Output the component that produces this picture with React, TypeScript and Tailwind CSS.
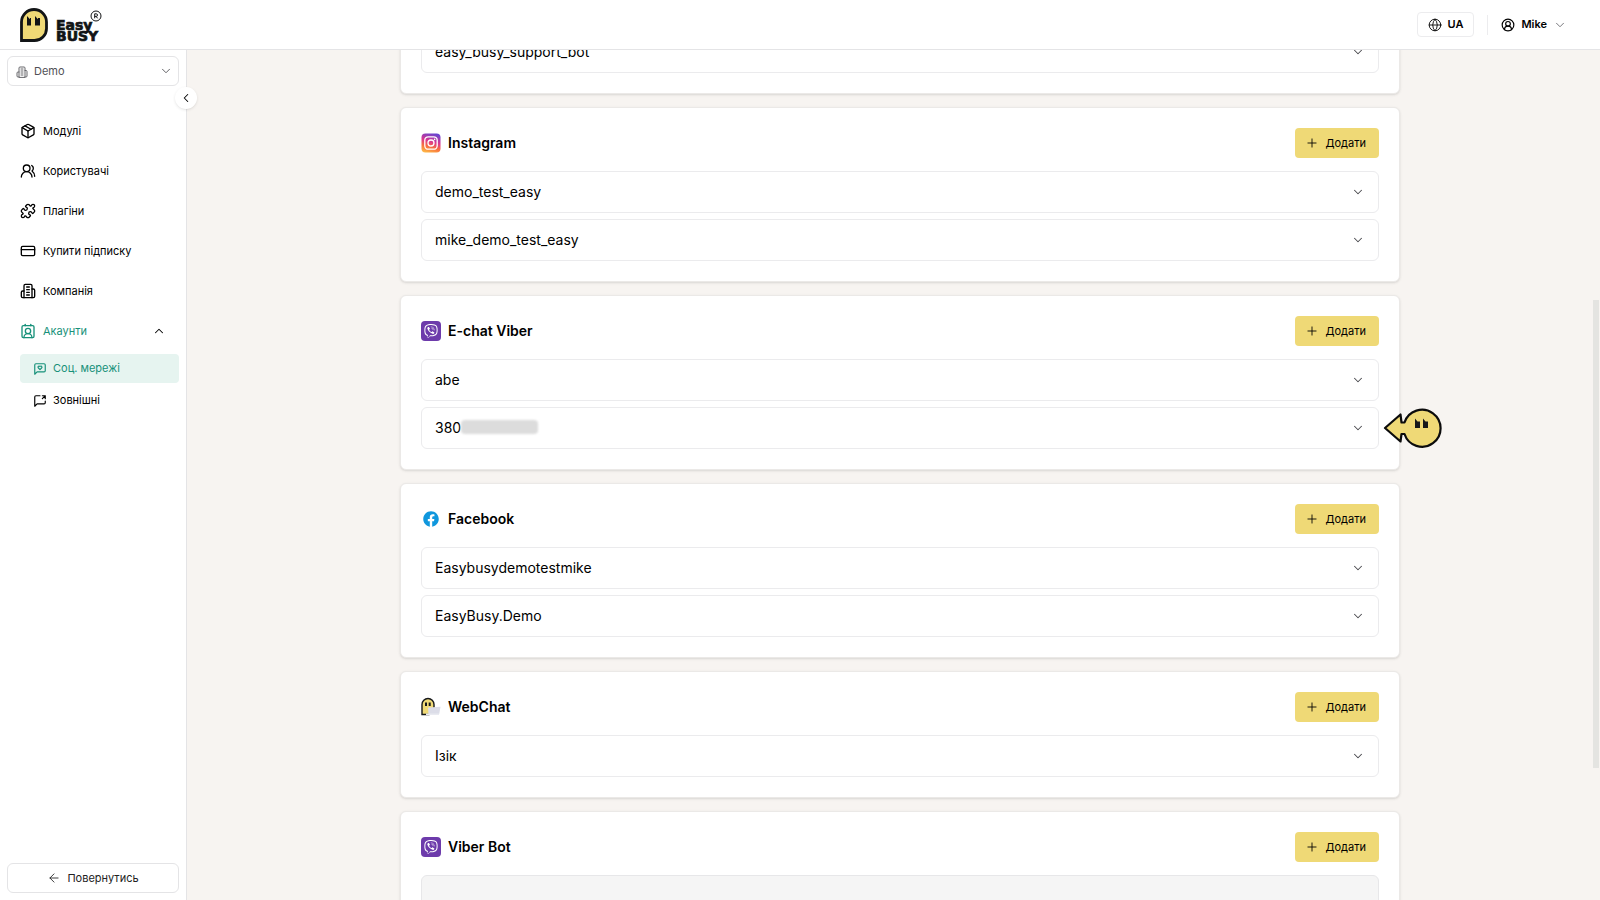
import { useLayoutEffect, useRef, useState } from "react";
import type { ReactNode } from "react";
import {
  ArrowLeft,
  ChevronDown,
  ChevronLeft,
  ChevronUp,
  CircleUserRound,
  ContactRound,
  CreditCard,
  Globe,
  Package,
  Plus,
  Puzzle,
  UsersRound,
} from "lucide-react";
import { FaFacebook, FaViber } from "react-icons/fa";

type Channel = {
  id: string;
  title?: string;
  icon?: ReactNode;
  accounts: string[];
};

function LineIcon({ className, children }: { className?: string; children: ReactNode }) {
  return (
    <svg
      viewBox="0 0 24 24"
      className={className}
      fill="none"
      stroke="currentColor"
      strokeWidth="2"
      strokeLinecap="round"
      strokeLinejoin="round"
      aria-hidden="true"
    >
      {children}
    </svg>
  );
}

function CompanyIcon({ className }: { className?: string }) {
  return (
    <LineIcon className={className}>
      <path d="M6 22V4a2 2 0 0 1 2-2h8a2 2 0 0 1 2 2v18Z" />
      <path d="M6 12H4a2 2 0 0 0-2 2v6a2 2 0 0 0 2 2h2" />
      <path d="M18 9h2a2 2 0 0 1 2 2v9a2 2 0 0 1-2 2h-2" />
      <path d="M10 6h4M10 10h4M10 14h4M10 18h4" />
    </LineIcon>
  );
}

function SocialIcon({ className }: { className?: string }) {
  return (
    <LineIcon className={className}>
      <path d="M21 15a2 2 0 0 1-2 2H7l-4 4V5a2 2 0 0 1 2-2h14a2 2 0 0 1 2 2z" />
      <path d="M14.800 7.500a1.840 1.840 0 0 0-2.600 0l-.2.3-.3-.3a1.840 1.840 0 1 0-2.400 2.800L12 13l2.700-2.700c.9-.9.8-2.100.1-2.800" />
    </LineIcon>
  );
}

function ExternalIcon({ className }: { className?: string }) {
  return (
    <LineIcon className={className}>
      <path d="M21 12v3a2 2 0 0 1-2 2H7l-4 4V5a2 2 0 0 1 2-2h7" />
      <path d="M16 3h5v5M16 8l5-5" />
    </LineIcon>
  );
}

const navItems = [
  { label: "Модулі", icon: Package },
  { label: "Користувачі", icon: UsersRound },
  { label: "Плагіни", icon: Puzzle },
  { label: "Купити підписку", icon: CreditCard },
  { label: "Компанія", icon: CompanyIcon },
];

function InstagramIcon() {
  return (
    <svg viewBox="0 0 20 20" className="h-5 w-5" aria-hidden="true">
      <defs>
        <linearGradient id="ig" x1="0.3" y1="1" x2="0.6" y2="0">
          <stop offset="0" stopColor="#fdb546" />
          <stop offset="0.3" stopColor="#f8703e" />
          <stop offset="0.6" stopColor="#d93590" />
          <stop offset="1" stopColor="#6a45cf" />
        </linearGradient>
      </defs>
      <rect x="0.5" y="0.5" width="19" height="19" rx="4" fill="url(#ig)" />
      <rect x="3.8" y="3.8" width="12.4" height="12.4" rx="3.5" fill="none" stroke="#fff" strokeWidth="1.3" />
      <circle cx="10" cy="10" r="3" fill="none" stroke="#fff" strokeWidth="1.3" />
      <circle cx="13.6" cy="6.4" r="0.8" fill="#fff" />
    </svg>
  );
}

function ViberIcon() {
  return (
    <span className="flex h-5 w-5 items-center justify-center rounded bg-[#6d3bab]">
      <FaViber className="h-3.5 w-3.5 text-white" />
    </span>
  );
}

function WebChatIcon() {
  return (
    <svg viewBox="0 0 20 20" className="h-5 w-5" aria-hidden="true">
      <path d="M1 17.500V7.500a6 6 0 0 1 12 0v5a5 5 0 0 1-5 5Z" fill="#efd976" stroke="#16181a" strokeWidth="1.400" />
      <path d="M5 5.500v3.500M8.700 5.500v3.500" stroke="#16181a" strokeWidth="2" />
      <path d="M7 10.500l12.500-.8-1.300 7.300a1 1 0 0 1-1 .8H7.500Z" fill="#dcdde8" />
      <path d="M5 16.500h13v1.500H5Z" fill="#e9eaf1" />
    </svg>
  );
}

const channels: Channel[] = [
  { id: "support", accounts: ["easy_busy_support_bot"] },
  { id: "instagram", title: "Instagram", icon: <InstagramIcon />, accounts: ["demo_test_easy", "mike_demo_test_easy"] },
  { id: "echat", title: "E-chat Viber", icon: <ViberIcon />, accounts: ["abe", "380"] },
  {
    id: "facebook",
    title: "Facebook",
    icon: <FaFacebook className="h-4 w-4 text-[#0f97dd]" />,
    accounts: ["Easybusydemotestmike", "EasyBusy.Demo"],
  },
  { id: "webchat", title: "WebChat", icon: <WebChatIcon />, accounts: ["Ізік"] },
  { id: "viber", title: "Viber Bot", icon: <ViberIcon />, accounts: [] },
];

function Logo() {
  return (
    <a href="#" className="flex items-center gap-2 text-[#121416]">
      <svg viewBox="0 0 28 34" className="h-[34px] w-7" aria-hidden="true">
        <path
          d="M1.500 32.500V14a12.500 12.500 0 0 1 25 0v6.500a12 12 0 0 1-12 12Z"
          fill="#efd976"
          stroke="#121416"
          strokeWidth="2.800"
        />
        <path d="M7 8l3 3.200v-1.200h1V17.500H7Z M15 8l3 3.200v-1.200h2V17.500H15Z" fill="#121416" />
      </svg>
      <span className="relative mt-3 flex flex-col font-['DejaVu_Sans'] text-sm leading-[11px] font-bold [-webkit-text-stroke:0.7px_#121416]">
        <span>Easy</span>
        <span>BUSY</span>
        <svg viewBox="0 0 12 12" className="absolute -top-2.5 left-[34px] h-3 w-3" aria-hidden="true">
          <circle cx="6" cy="6" r="5" fill="#fff" stroke="#121416" />
          <path d="M4.700 8.300V3.800h1.500a1.300 1.300 0 0 1 0 2.600H4.700M6.200 6.400l1.300 1.900" fill="none" stroke="#121416" />
        </svg>
      </span>
    </a>
  );
}

function Pointer() {
  return (
    <svg viewBox="0 0 60 42" className="absolute top-0 left-full ml-1 h-[42px] w-[60px]" aria-hidden="true">
      <path
        d="M2 21 L17.500 7.500 L18.500 15.500 L21.500 15.500 A18.500 18.500 0 1 1 21.500 27 L18.500 27 L17.500 34.500 Z"
        fill="#efd976"
        stroke="#0c0c0c"
        strokeWidth="2.200"
        strokeLinejoin="round"
      />
      <path d="M32 11.500l2.500 3h2.500V21h-5Z M40 11.500l2.500 3h2.500V21h-5Z" fill="#16181a" />
    </svg>
  );
}

function AccountRow({ name, masked }: { name: string; masked?: boolean }) {
  return (
    <li className="relative">
      <button
        type="button"
        className="flex h-[42px] w-full items-center rounded-md border border-[#ebebed] bg-white px-[13px] text-left text-sm hover:bg-gray-50"
      >
        {name}
        {masked && <span className="mb-0.5 h-3.5 w-[77px] rounded-sm bg-[#dcdcdc] blur-[1px]" />}
        <ChevronDown className="ml-auto h-3.5 w-3.5 text-[#4b4b50]" strokeWidth={1.8} />
      </button>
      {masked && <Pointer />}
    </li>
  );
}

function ChannelCard({ channel }: { channel: Channel }) {
  return (
    <section className="rounded-md border border-[#ebe9e7] bg-white p-5 shadow-sm">
      {channel.title && (
        <div className="mb-[13px] flex h-[30px] items-center justify-between">
          <h2 className="flex items-center gap-[7px] text-sm font-semibold">
            <span className="flex w-5 justify-center">{channel.icon}</span>
            {channel.title}
          </h2>
          <button
            type="button"
            className="flex h-[30px] items-center gap-[7px] rounded bg-[#efd976] pr-[13px] pl-2.5 text-[11px] hover:bg-[#e8cf62]"
          >
            <Plus className="h-3.5 w-3.5" strokeWidth={1.5} />
            Додати
          </button>
        </div>
      )}
      {channel.accounts.length > 0 ? (
        <ul className="space-y-1.5">
          {channel.accounts.map((name) => (
            <AccountRow key={name} name={name} masked={name === "380"} />
          ))}
        </ul>
      ) : (
        <div className="h-28 rounded-md border border-[#e7e7e9] bg-[#f5f5f5]" />
      )}
    </section>
  );
}

function Sidebar() {
  const [open, setOpen] = useState(true);

  return (
    <aside className="relative z-10 flex w-[187px] shrink-0 flex-col border-r border-[#e4e4e6] bg-white px-[7px] pt-1.5 pb-[7px]">
      <div className="relative">
        <CompanyIcon className="absolute top-2.5 left-[9px] h-3 w-3 text-[#66666b]" />
        <select
          aria-label="Компанія"
          className="h-[30px] w-full appearance-none rounded-md border border-[#e4e4e6] bg-white pl-[26px] text-[11px] text-[#505055]"
        >
          <option>Demo</option>
        </select>
        <ChevronDown className="pointer-events-none absolute top-2 right-1.5 h-3.5 w-3.5 text-[#4b4b50]" strokeWidth={1.5} />
      </div>

      <button
        type="button"
        aria-label="Згорнути меню"
        className="absolute top-[37px] -right-[11px] flex h-[22px] w-[22px] items-center justify-center rounded-full bg-white shadow"
      >
        <ChevronLeft className="h-3.5 w-3.5" strokeWidth={1.8} />
      </button>

      <nav className="mt-[25px] text-[11px]">
        {navItems.map(({ label, icon: Icon }) => (
          <a key={label} href="#" className="flex h-10 items-center gap-[7px] px-[13px]">
            <Icon className="h-4 w-4" />
            {label}
          </a>
        ))}
        <button
          type="button"
          onClick={() => setOpen(!open)}
          className="flex h-10 w-full items-center gap-[7px] px-[13px] text-[#17917a]"
        >
          <ContactRound className="h-4 w-4" />
          Акаунти
          <ChevronUp className={open ? "ml-auto h-3.5 w-3.5 text-black" : "ml-auto h-3.5 w-3.5 rotate-180 text-black"} strokeWidth={1.8} />
        </button>
        {open && (
          <div className="mt-[3px] ml-[13px] space-y-[3px]">
            <a href="#" className="flex h-[29px] items-center gap-1.5 rounded bg-[#e6f4f0] pl-[13px] text-[#17917a]">
              <SocialIcon className="h-3.5 w-3.5" />
              Соц. мережі
            </a>
            <a href="#" className="flex h-[29px] items-center gap-1.5 rounded pl-[13px]">
              <ExternalIcon className="h-3.5 w-3.5" />
              Зовнішні
            </a>
          </div>
        )}
      </nav>

      <button
        type="button"
        className="mt-auto flex h-[30px] items-center justify-center gap-1.5 rounded-md border border-[#e4e4e6] text-[11px] text-[#222]"
      >
        <ArrowLeft className="h-3.5 w-3.5" strokeWidth={1.5} />
        Повернутись
      </button>
    </aside>
  );
}

export default function App() {
  const scroller = useRef<HTMLElement>(null);

  useLayoutEffect(() => {
    scroller.current?.scrollTo(0, 56);
  }, []);

  return (
    <div className="flex h-screen flex-col bg-white font-['Inter','Noto_Sans',sans-serif] text-black">
      <header className="flex h-[50px] shrink-0 items-center justify-between border-b border-[#e4e4e6] pr-[33px] pl-5">
        <Logo />
        <div className="flex items-center text-[11px] font-semibold">
          <button type="button" className="flex h-[25px] items-center gap-1.5 rounded border border-[#ececee] px-2.5">
            <Globe className="h-3.5 w-3.5" strokeWidth={1.5} />
            UA
          </button>
          <span className="mx-[13px] h-5 w-px bg-[#ececee]" />
          <button type="button" className="flex items-center gap-1.5">
            <CircleUserRound className="h-3.5 w-3.5" />
            Mike
            <ChevronDown className="h-3.5 w-3.5 text-[#66666b]" strokeWidth={1.5} />
          </button>
        </div>
      </header>

      <div className="relative flex min-h-0 flex-1">
        <Sidebar />
        <main ref={scroller} className="flex-1 overflow-y-auto bg-[#f7f4f1] py-4 pr-4 pl-[29px] [scrollbar-width:none]">
          <div className="mx-auto max-w-[1000px] space-y-[13px]">
            {channels.map((channel) => (
              <ChannelCard key={channel.id} channel={channel} />
            ))}
          </div>
        </main>
        {/* scroll thumb */}
        <div className="absolute top-[250px] right-px h-[468px] w-1.5 bg-[#e4e4e1]" />
      </div>
    </div>
  );
}
